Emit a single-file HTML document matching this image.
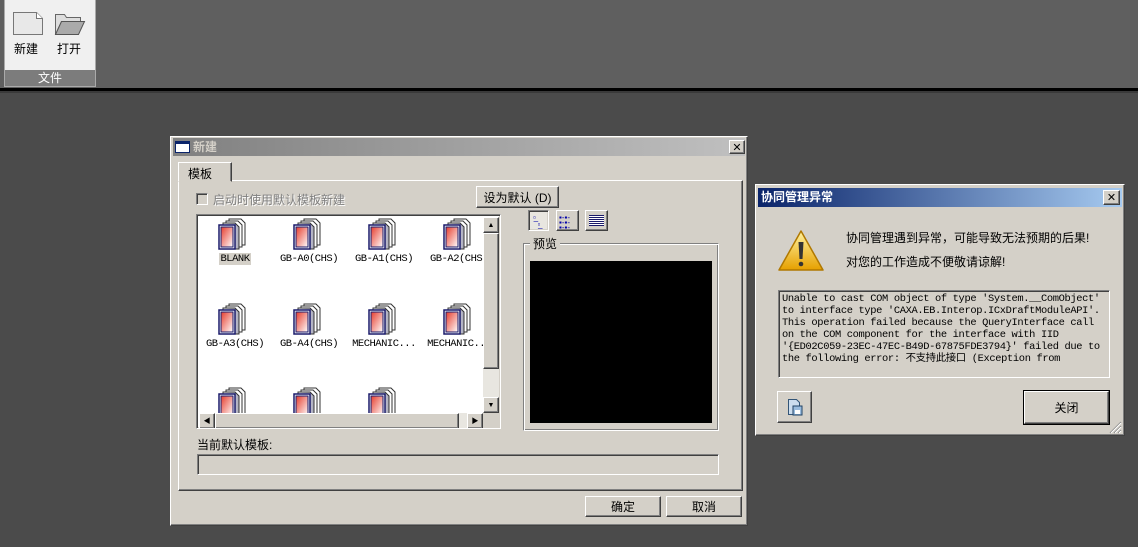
<!DOCTYPE html><html><head><meta charset="utf-8"><style>
*{box-sizing:border-box;margin:0;padding:0}
body{width:1138px;height:547px;background:#4b4b4b;position:relative;overflow:hidden;font-family:"Liberation Sans","Noto Sans CJK SC",sans-serif;font-size:12px;color:#000}
.a{position:absolute}
.rb{border:1px solid;border-color:#fff #404040 #404040 #fff;box-shadow:inset -1px -1px #808080,inset 1px 1px #d4d0c8;background:#d4d0c8}
.sk{border:1px solid;border-color:#808080 #fff #fff #808080;box-shadow:inset 1px 1px #404040,inset -1px -1px #d4d0c8}
.mono{font-family:"Liberation Mono","Noto Sans CJK SC",monospace;font-size:11px}
.ic{position:absolute;width:34px;height:34px}
.lbl{position:absolute;font-family:"Liberation Mono","Noto Sans CJK SC",monospace;font-size:10.5px;width:80px;text-align:center;letter-spacing:-0.5px}
.c{display:flex;align-items:center;justify-content:center}
</style></head><body>
<div class="a" style="left:0;top:0;width:1138px;height:88px;background:#5f5f5f"></div>
<div class="a" style="left:0;top:88px;width:1138px;height:3px;background:#000"></div>
<div class="a" style="left:0;top:91px;width:1138px;height:2px;background:#3a3a3a"></div>
<div class="a" style="left:4px;top:0;width:92px;height:87px;background:#f0f0f0;border:1px solid #aaa;border-top:none"></div>
<div class="a" style="left:5px;top:70px;width:90px;height:16px;background:#7c7c7c;color:#fff;text-align:center;line-height:16px;font-size:12px">文件</div>
<svg class="a" style="left:12px;top:11px" width="32" height="25"><path d="M1.5 1.5h23l6 6v16h-29z" fill="#e8e8e8" stroke="#777"/><path d="M24.5 1.5v6h6" fill="#fff" stroke="#777"/></svg>
<svg class="a" style="left:54px;top:12px" width="32" height="24"><path d="M1.5 2.5h9l2 3h14v4h-19l-6 13z" fill="#ddd" stroke="#666"/><path d="M1.5 22.5l6-13h23l-6 13z" fill="#aaa" stroke="#555"/></svg>
<div class="a" style="left:14px;top:40px;font-size:12px">新建</div>
<div class="a" style="left:57px;top:40px;font-size:12px">打开</div>

<!-- New dialog -->
<div class="a rb" style="left:170px;top:136px;width:578px;height:390px"></div>
<div class="a" style="left:173px;top:138px;width:572px;height:18px;background:linear-gradient(90deg,#808080,#c0c0c0);color:#d4d0c8;font-weight:bold;line-height:18px;padding-left:20px">新建</div>
<div class="a" style="left:175px;top:141px;width:15px;height:12px;background:#fff;border:1px solid #0a246a;border-top:3px solid #0a246a"></div>
<div class="a rb c" style="left:729px;top:140px;width:16px;height:14px;font-size:11px">✕</div>
<div class="a" style="left:178px;top:180px;width:565px;height:311px;border:1px solid;border-color:#fff #404040 #404040 #fff;box-shadow:inset -1px -1px #808080"></div>
<div class="a" style="left:178px;top:162px;width:54px;height:20px;background:#d4d0c8;border:1px solid;border-color:#fff #404040 transparent #fff;box-shadow:inset -1px 0 #808080;padding:2px 0 0 9px">模板</div>
<div class="a sk" style="left:196px;top:193px;width:12px;height:12px;background:#d4d0c8"></div>
<div class="a" style="left:213px;top:191px;color:#808080;text-shadow:1px 1px #fff">启动时使用默认模板新建</div>
<div class="a rb c" style="left:476px;top:186px;width:83px;height:22px">设为默认 (D)</div>

<div class="a sk" style="left:196px;top:214px;width:305px;height:215px;background:#fff;overflow:hidden">
<svg width="0" height="0" style="position:absolute"><defs><linearGradient id="g" x1="0" y1="0" x2="1" y2="1"><stop offset="0" stop-color="#e63c2c"/><stop offset="1" stop-color="#fff"/></linearGradient><linearGradient id="h" x1="0" y1="0" x2="1" y2="0"><stop offset="0" stop-color="#fff"/><stop offset="1" stop-color="#aab"/></linearGradient>
<g id="ic"><path d="M12 1h12l4 4v22h-16z" fill="#fff" stroke="#333"/><path d="M9 3h12l4 4v22h-16z" fill="#fff" stroke="#333"/><path d="M6 5h12l4 4v22h-16z" fill="url(#h)" stroke="#333"/><rect x="2" y="7" width="16" height="24" fill="#fff" stroke="#1a1a6a" stroke-width="1.5"/><rect x="4" y="9" width="12" height="20" fill="url(#g)" stroke="#1a1a6a"/></g></defs></svg>
<svg class="ic" style="left:20px;top:3px"><use href="#ic"/></svg>
<svg class="ic" style="left:95px;top:3px"><use href="#ic"/></svg>
<svg class="ic" style="left:170px;top:3px"><use href="#ic"/></svg>
<svg class="ic" style="left:245px;top:3px"><use href="#ic"/></svg>
<svg class="ic" style="left:20px;top:88px"><use href="#ic"/></svg>
<svg class="ic" style="left:95px;top:88px"><use href="#ic"/></svg>
<svg class="ic" style="left:170px;top:88px"><use href="#ic"/></svg>
<svg class="ic" style="left:245px;top:88px"><use href="#ic"/></svg>
<svg class="ic" style="left:20px;top:172px"><use href="#ic"/></svg>
<svg class="ic" style="left:95px;top:172px"><use href="#ic"/></svg>
<svg class="ic" style="left:170px;top:172px"><use href="#ic"/></svg>
<div class="lbl" style="left:-2px;top:38px"><span style="background:#d4d0c8;padding:0 1px">BLANK</span></div>
<div class="lbl" style="left:72px;top:38px">GB-A0(CHS)</div>
<div class="lbl" style="left:147px;top:38px">GB-A1(CHS)</div>
<div class="lbl" style="left:222px;top:38px">GB-A2(CHS)</div>
<div class="lbl" style="left:-2px;top:123px">GB-A3(CHS)</div>
<div class="lbl" style="left:72px;top:123px">GB-A4(CHS)</div>
<div class="lbl" style="left:147px;top:123px">MECHANIC...</div>
<div class="lbl" style="left:222px;top:123px">MECHANIC...</div>
<div class="a" style="left:286px;top:2px;width:16px;height:196px;background:#e8e6e0"></div>
<div class="a rb c" style="left:286px;top:2px;width:16px;height:16px;font-size:7px">▲</div>
<div class="a rb" style="left:286px;top:18px;width:16px;height:136px"></div>
<div class="a rb c" style="left:286px;top:182px;width:16px;height:16px;font-size:7px">▼</div>
<div class="a" style="left:2px;top:198px;width:284px;height:16px;background:#e8e6e0"></div>
<div class="a rb c" style="left:2px;top:198px;width:16px;height:16px;font-size:7px">◀</div>
<div class="a rb" style="left:18px;top:198px;width:244px;height:16px"></div>
<div class="a rb c" style="left:270px;top:198px;width:16px;height:16px;font-size:7px">▶</div>
<div class="a" style="left:286px;top:198px;width:16px;height:16px;background:#d4d0c8"></div>
</div>

<div class="a sk" style="left:528px;top:210px;width:21px;height:21px;background:#e8e6e0;font-size:8px;color:#00a;padding:3px 0 0 4px;line-height:7px">▫̲<br>&nbsp;&nbsp;▫̲</div>
<div class="a rb" style="left:556px;top:210px;width:23px;height:21px;font-size:8px;color:#00a;line-height:5px;padding:4px 2px">▪-▪-<br>▪-▪-<br>▪-▪-</div>
<div class="a rb" style="left:585px;top:210px;width:23px;height:21px"><div style="margin:4px 3px;height:11px;background:repeating-linear-gradient(#1a1a6a 0 1px,#fff 1px 2px)"></div></div>
<div class="a" style="left:523px;top:243px;width:196px;height:188px;border:1px solid;border-color:#808080 #fff #fff #808080;box-shadow:inset 1px 1px #fff,inset -1px -1px #808080"></div>
<div class="a" style="left:530px;top:235px;background:#d4d0c8;padding:0 3px;font-size:12px">预览</div>
<div class="a" style="left:530px;top:261px;width:182px;height:162px;background:#000"></div>
<div class="a" style="left:197px;top:436px">当前默认模板:</div>
<div class="a sk" style="left:197px;top:454px;width:522px;height:21px;background:#d4d0c8"></div>
<div class="a rb c" style="left:585px;top:496px;width:76px;height:21px">确定</div>
<div class="a rb c" style="left:666px;top:496px;width:76px;height:21px">取消</div>

<!-- error dialog -->
<div class="a rb" style="left:755px;top:184px;width:370px;height:252px"></div>
<div class="a" style="left:758px;top:188px;width:364px;height:19px;background:linear-gradient(90deg,#0a246a,#a6caf0);color:#fff;font-weight:bold;line-height:19px;padding-left:3px;font-size:12px">协同管理异常</div>
<div class="a rb c" style="left:1103px;top:190px;width:17px;height:15px;font-size:11px">✕</div>
<svg class="a" style="left:777px;top:229px" width="48" height="44"><defs><linearGradient id="w" x1="0" y1="0" x2="0" y2="1"><stop offset="0" stop-color="#fff2a0"/><stop offset="1" stop-color="#e6a000"/></linearGradient></defs><path d="M24 2L46 41H2z" fill="url(#w)" stroke="#b07800" stroke-linejoin="round" stroke-width="1.5"/><path d="M21.5 13h5l-1 17h-3z" fill="#333"/><circle cx="24" cy="35" r="2.3" fill="#333"/></svg>
<div class="a" style="left:846px;top:229px;font-size:12px">协同管理遇到异常，可能导致无法预期的后果!</div>
<div class="a" style="left:846px;top:253px;font-size:12px">对您的工作造成不便敬请谅解!</div>
<div class="a sk mono" style="left:778px;top:290px;width:332px;height:88px;background:#d4d0c8;padding:2px 3px;line-height:12px;white-space:pre;font-size:10.4px;letter-spacing:-0.35px">Unable to cast COM object of type 'System.__ComObject'
to interface type 'CAXA.EB.Interop.ICxDraftModuleAPI'.
This operation failed because the QueryInterface call
on the COM component for the interface with IID
'{ED02C059-23EC-47EC-B49D-67875FDE3794}' failed due to
the following error: 不支持此接口 (Exception from</div>
<div class="a rb c" style="left:777px;top:391px;width:35px;height:32px"><svg width="16" height="18"><path d="M1.5 1.5h8l3 3v12h-11z" fill="#cde" stroke="#357"/><rect x="6" y="8" width="9" height="9" fill="#9bd" stroke="#246"/><rect x="8" y="12" width="5" height="4" fill="#fff"/></svg></div>
<div class="a c" style="left:1023px;top:390px;width:87px;height:35px;border:1px solid #000"><div class="rb c" style="width:85px;height:33px">关闭</div></div>
<svg class="a" style="left:1108px;top:420px" width="14" height="14"><path d="M13 2L2 13M13 6L6 13M13 10L10 13" stroke="#808080"/><path d="M13 3L3 13M13 7L7 13M13 11L11 13" stroke="#fff"/></svg>
</body></html>
